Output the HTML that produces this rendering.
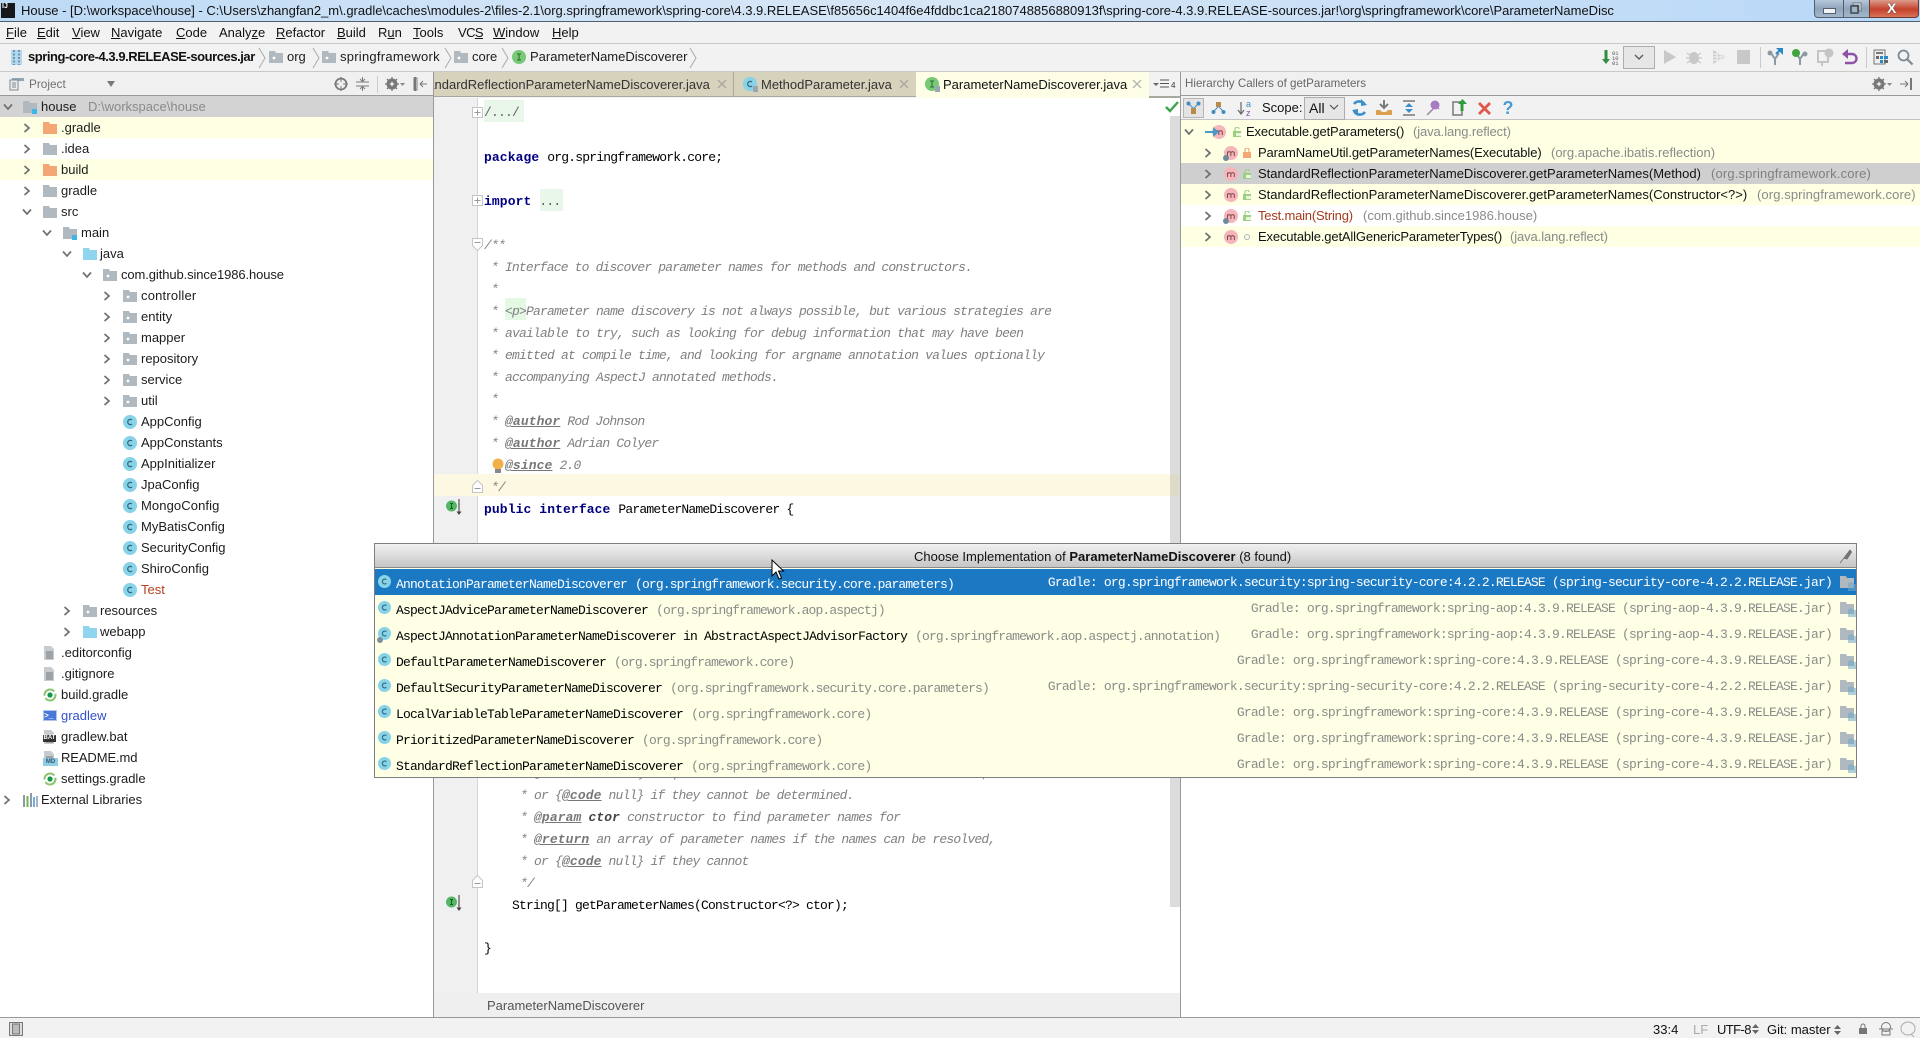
<!DOCTYPE html>
<html lang="en"><head><meta charset="utf-8"><title>House</title>
<style>
html,body{margin:0;padding:0;width:1920px;height:1038px;overflow:hidden;background:#fff}
body{position:relative;font:13px/20px "Liberation Sans",sans-serif;color:#1c1c1c}
.a{position:absolute}
.t{position:absolute;white-space:pre;height:20px;line-height:20px}
.i{position:absolute;overflow:visible}
.m{position:absolute;white-space:pre;height:20px;line-height:20px;margin-top:1px;font:13px/20px "Liberation Mono",monospace;letter-spacing:-.8px;color:#000}
.k{font-weight:bold;color:#000080;letter-spacing:.1px}
.c{color:#808080;font-style:italic}
.g{font-weight:bold;text-decoration:underline;color:#777;letter-spacing:.1px}
.p{color:#8b8b8b}
span.p,span.q{letter-spacing:-.87px;margin-left:1px}
.gy{color:#8a8a8a}
.r{right:88px}
u{text-decoration:underline}
</style></head><body>
<svg width="0" height="0" style="position:absolute"><defs>
<symbol id="fg" viewBox="0 0 14 14"><path d="M0 1h6l1 2h7v10H0z" fill="#b0b9bf"/></symbol>
<symbol id="fo" viewBox="0 0 14 14"><path d="M0 1h6l1 2h7v10H0z" fill="#f4a674"/></symbol>
<symbol id="fb" viewBox="0 0 14 14"><path d="M0 1h6l1 2h7v10H0z" fill="#8fd5ef"/></symbol>
<symbol id="pk" viewBox="0 0 14 14"><path d="M0 1h6l1 2h7v10H0z" fill="#b0b9bf"/><circle cx="5" cy="8" r="1.400" fill="#fff"/></symbol>
<symbol id="md" viewBox="0 0 14 14"><path d="M0 1h6l1 2h7v10H0z" fill="#b0b9bf"/><rect x="9" y="9" width="5" height="5" fill="#3fb4e6"/></symbol>
<symbol id="cl" viewBox="0 0 14 14"><circle cx="7" cy="7" r="7" fill="#87d3e8"/><path d="M9 5a2.600 2.600 0 1 0 0 4" fill="none" stroke="#36697f" stroke-width="1.300"/></symbol>
<symbol id="ch" viewBox="0 0 10 10"><path d="M2.500 1l4.500 4-4.500 4" fill="none" stroke="#6f6f6f" stroke-width="1.700"/></symbol>
<symbol id="cd" viewBox="0 0 10 10"><path d="M1 2.500l4 4.500 4-4.500" fill="none" stroke="#6f6f6f" stroke-width="1.700"/></symbol>
<symbol id="mt" viewBox="0 0 14 14"><circle cx="7" cy="7" r="7" fill="#f5b5ba"/><path d="M3.500 10V5.500M3.500 6.500q1.700-1.600 3.400 0V10M6.900 6.500q1.700-1.600 3.400 0V10" fill="none" stroke="#7d4a4a" stroke-width="1"/></symbol>
<symbol id="lk" viewBox="0 0 10 10"><rect x="1" y="4" width="8" height="6" fill="#9ad07f"/><path d="M3 4V2a2 2 0 0 1 4 0" fill="none" stroke="#9ad07f" stroke-width="1.200"/><rect x="4" y="6" width="5" height="3" fill="#e7f5dd"/></symbol>
<symbol id="lr" viewBox="0 0 10 10"><rect x="1" y="4" width="8" height="6" fill="#f4a674"/><path d="M3 4V2a2 2 0 0 1 4 0V4" fill="none" stroke="#f4a674" stroke-width="1.200"/></symbol>
<symbol id="lib" viewBox="0 0 16 16"><path d="M0 1h6l1 2h7v10H0z" fill="#b0b9bf"/><path d="M9 8v8M11 7v9M13 8v8M15 9v7" stroke="#6fa7c9" stroke-width="1.100"/></symbol>
<symbol id="gr" viewBox="0 0 14 14"><circle cx="7" cy="7" r="5.500" fill="none" stroke="#8cc46c" stroke-width="2" stroke-dasharray="14 2.500"/><circle cx="7" cy="7" r="2.600" fill="#14964f"/></symbol>
<symbol id="tx" viewBox="0 0 14 14"><path d="M1 0h7l3 3v11H1z" fill="#c7ccd0"/><path d="M3 6h7M3 8h7M3 10h7M3 12h7" stroke="#70777c"/></symbol>
<symbol id="ii" viewBox="0 0 14 14"><circle cx="7" cy="7" r="7" fill="#78c878"/><path d="M5 4h4M7 4v6M5 10h4" stroke="#2d6d2d" fill="none"/></symbol>
<symbol id="gi" viewBox="0 0 18 18"><circle cx="5.500" cy="7" r="5.500" fill="#55b765"/><path d="M4 4.500h3M5.500 4.500v5M4 9.500h3" stroke="#1a5c25" fill="none"/><path d="M13 0v13" stroke="#333"/><path d="M10.500 12.500h5L13 16z" fill="#444"/></symbol>
</defs></svg>

<!-- title bar -->
<div class="a" style="left:0;top:0;width:1920px;height:21px;background:linear-gradient(90deg,#bcd9f5 0,#cfe3f7 25%,#d6e6f6 50%,#c4ddf6 80%,#b7d8f8 100%)"></div>
<div class="a" style="left:0;top:21px;width:1920px;height:1px;background:#4f5f70"></div>
<div class="a" style="left:1px;top:3px;width:13px;height:15px;background:#16181c;color:#fff;font:bold 7px/8px 'Liberation Sans',sans-serif;padding-left:1px">IJ</div>
<div class="t" style="left:21px;top:1px;color:#111;font-size:13px;letter-spacing:-.01px">House - [D:\workspace\house] - C:\Users\zhangfan2_m\.gradle\caches\modules-2\files-2.1\org.springframework\spring-core\4.3.9.RELEASE\f85656c1404f6e4fddbc1ca2180748856880913f\spring-core-4.3.9.RELEASE-sources.jar!\org\springframework\core\ParameterNameDisc</div>
<div class="a" style="left:1814px;top:0;width:28px;height:17px;background:linear-gradient(#b5c7da,#8fa5bb 50%,#a3b7ca);border:1px solid #51606f;border-top:0;border-radius:0 0 0 4px"></div>
<div class="a" style="left:1823px;top:8px;width:11px;height:4px;background:#eef3f8;border:1px solid #55606b"></div>
<div class="a" style="left:1843px;top:0;width:26px;height:17px;background:linear-gradient(#b5c7da,#8fa5bb 50%,#a3b7ca);border:1px solid #51606f;border-top:0"></div>
<svg class="i" style="left:1849px;top:2px" width="14" height="13"><path d="M4 1h8v8h-2V3H4z" fill="#e8eef4" stroke="#55606b" stroke-width=".8"/><rect x="2" y="4" width="7" height="7" fill="#a0b4c8" stroke="#3c4650" stroke-width="1.500"/></svg>
<div class="a" style="left:1869px;top:0;width:48px;height:17px;background:linear-gradient(#dd9d8c,#c4422b 55%,#d9745a);border:1px solid #6b3a35;border-top:0;border-radius:0 0 4px 0"></div>
<div class="a" style="left:1887px;top:0;width:16px;height:16px;color:#fff;font:bold 14px/16px 'Liberation Sans',sans-serif;text-shadow:0 0 1px #444,0 0 1px #444">X</div>

<!-- menu -->
<div class="a" style="left:0;top:22px;width:1920px;height:21px;background:#f2f2f2"></div>
<div class="a" style="left:0;top:43px;width:1920px;height:1px;background:#c9c9c9"></div>
<div style="color:#111">
<div class="t" style="left:6px;top:23px"><u>F</u>ile</div>
<div class="t" style="left:37px;top:23px"><u>E</u>dit</div>
<div class="t" style="left:72px;top:23px"><u>V</u>iew</div>
<div class="t" style="left:111px;top:23px"><u>N</u>avigate</div>
<div class="t" style="left:176px;top:23px"><u>C</u>ode</div>
<div class="t" style="left:219px;top:23px">Analy<u>z</u>e</div>
<div class="t" style="left:276px;top:23px"><u>R</u>efactor</div>
<div class="t" style="left:337px;top:23px"><u>B</u>uild</div>
<div class="t" style="left:378px;top:23px">R<u>u</u>n</div>
<div class="t" style="left:413px;top:23px"><u>T</u>ools</div>
<div class="t" style="left:458px;top:23px;letter-spacing:-.6px">VC<u>S</u></div>
<div class="t" style="left:493px;top:23px"><u>W</u>indow</div>
<div class="t" style="left:552px;top:23px"><u>H</u>elp</div>
</div>

<!-- nav bar -->
<div class="a" style="left:0;top:44px;width:1920px;height:27px;background:#f2f2f2"></div>
<div class="a" style="left:0;top:71px;width:1920px;height:1px;background:#c9c9c9"></div>
<svg class="i" style="left:11px;top:50px" width="11" height="15"><rect width="11" height="15" fill="#b9d6e8"/><path d="M3 0v15M8 0v15" stroke="#5b9ac4" stroke-width="2" stroke-dasharray="2 1.500"/></svg>
<div class="t" style="left:28px;top:47px;font-weight:bold;letter-spacing:-.45px;color:#111">spring-core-4.3.9.RELEASE-sources.jar</div>
<svg class="i" style="left:258px;top:47px" width="8" height="22"><path d="M1 1l6 10-6 10" fill="none" stroke="#aaa"/></svg>
<svg class="i" style="left:269px;top:50px" width="14" height="14"><use href="#pk"/></svg>
<div class="t" style="left:287px;top:47px">org</div>
<svg class="i" style="left:312px;top:47px" width="8" height="22"><path d="M1 1l6 10-6 10" fill="none" stroke="#aaa"/></svg>
<svg class="i" style="left:322px;top:50px" width="14" height="14"><use href="#pk"/></svg>
<div class="t" style="left:340px;top:47px;letter-spacing:.25px">springframework</div>
<svg class="i" style="left:444px;top:47px" width="8" height="22"><path d="M1 1l6 10-6 10" fill="none" stroke="#aaa"/></svg>
<svg class="i" style="left:454px;top:50px" width="14" height="14"><use href="#pk"/></svg>
<div class="t" style="left:472px;top:47px">core</div>
<svg class="i" style="left:501px;top:47px" width="8" height="22"><path d="M1 1l6 10-6 10" fill="none" stroke="#aaa"/></svg>
<svg class="i" style="left:512px;top:50px" width="14" height="14"><use href="#ii"/></svg>
<div class="t" style="left:530px;top:47px">ParameterNameDiscoverer</div>
<svg class="i" style="left:689px;top:47px" width="8" height="22"><path d="M1 1l6 10-6 10" fill="none" stroke="#aaa"/></svg>

<!-- nav toolbar icons -->
<svg class="i" style="left:1602px;top:49px" width="20" height="16"><path d="M4 1v10" stroke="#2f8f3f" stroke-width="3"/><path d="M0 10h8l-4 5z" fill="#2f8f3f"/><text x="10" y="6" font-size="5.500" fill="#555" font-family="Liberation Mono">01</text><text x="10" y="11" font-size="5.500" fill="#555" font-family="Liberation Mono">10</text><text x="10" y="16" font-size="5.500" fill="#555" font-family="Liberation Mono">01</text></svg>
<div class="a" style="left:1623px;top:46px;width:30px;height:21px;background:#e6e6e6;border:1px solid #adadad"></div>
<svg class="i" style="left:1634px;top:53px" width="10" height="10"><path d="M1 2l4 4 4-4" fill="none" stroke="#555" stroke-width="1.300"/></svg>
<svg class="i" style="left:1663px;top:49px" width="14" height="16"><path d="M1 1l12 7-12 7z" fill="#c8c8c8"/></svg>
<svg class="i" style="left:1686px;top:49px" width="16" height="16"><ellipse cx="8" cy="9" rx="5" ry="6" fill="#c8c8c8"/><path d="M1 4l3 2M15 4l-3 2M0 9h3M13 9h3M1 14l3-2M15 14l-3-2" stroke="#c8c8c8" stroke-width="1.200"/></svg>
<svg class="i" style="left:1712px;top:49px" width="15" height="16"><path d="M1 1l13 7-13 7z" fill="#d0d0d0"/><path d="M1 5h12M1 8h12M1 11h12M5 1v14M9 1v14" stroke="#f2f2f2"/></svg>
<div class="a" style="left:1737px;top:50px;width:13px;height:14px;background:#c8c8c8"></div>
<div class="a" style="left:1760px;top:47px;width:1px;height:21px;background:#c9c9c9"></div>
<svg class="i" style="left:1767px;top:48px" width="17" height="18"><path d="M4 5l4 6v6M12 5l-4 6" stroke="#8b9aa3" stroke-width="2" fill="none"/><circle cx="3" cy="5" r="2.500" fill="#8b9aa3"/><path d="M9 0h7v7z" fill="#2a88c8"/><path d="M9 6l5-5" stroke="#2a88c8" stroke-width="2"/></svg>
<svg class="i" style="left:1792px;top:48px" width="17" height="18"><path d="M4 5l4 6v6M12 5l-4 6" stroke="#8b9aa3" stroke-width="2" fill="none"/><circle cx="4" cy="5" r="4" fill="#3fa33f"/><circle cx="13" cy="6" r="2.500" fill="#8b9aa3"/></svg>
<svg class="i" style="left:1817px;top:48px" width="17" height="18"><rect x="1" y="3" width="10" height="11" fill="none" stroke="#c5c5c5" stroke-width="2"/><circle cx="12" cy="5" r="4.500" fill="#c5c5c5"/><path d="M5 14v4" stroke="#c5c5c5" stroke-width="2"/></svg>
<svg class="i" style="left:1842px;top:49px" width="16" height="16"><path d="M2 5h8a4.500 4.500 0 0 1 0 9H3" fill="none" stroke="#8d53a8" stroke-width="2.400"/><path d="M6 0v10L0 5z" fill="#8d53a8"/></svg>
<div class="a" style="left:1866px;top:47px;width:1px;height:21px;background:#c9c9c9"></div>
<svg class="i" style="left:1873px;top:49px" width="16" height="16"><rect x="1" y="1" width="11" height="14" fill="#eee" stroke="#777"/><path d="M3 4h7" stroke="#777" stroke-width="2"/><rect x="3" y="7" width="3" height="3" fill="#666"/><rect x="7" y="7" width="3" height="3" fill="#2a88c8"/><rect x="11" y="7" width="4" height="3" fill="#2a88c8"/><rect x="7" y="11" width="3" height="3" fill="#2a88c8"/><rect x="11" y="11" width="4" height="3" fill="#666"/></svg>
<svg class="i" style="left:1897px;top:49px" width="16" height="16"><circle cx="6.500" cy="6.500" r="5" fill="none" stroke="#7c8a92" stroke-width="1.800"/><path d="M10.500 10.500l5 5" stroke="#7c8a92" stroke-width="2.200"/></svg>

<!-- left panel header -->
<div class="a" style="left:0;top:72px;width:433px;height:23px;background:#f0f0f0"></div>
<div class="a" style="left:0;top:95px;width:433px;height:1px;background:#999"></div>
<svg class="i" style="left:9px;top:77px" width="15" height="14"><rect x="3" y="1" width="12" height="3" fill="#8fa6b5"/><rect x="1" y="3" width="8" height="10" fill="#eee" stroke="#7b8a94"/><path d="M3 6h4M3 8h4M3 10h4" stroke="#7b8a94"/></svg>
<div class="t" style="left:29px;top:74px;color:#6f6f6f;font-size:11.800px">Project</div>
<svg class="i" style="left:107px;top:81px" width="8" height="6"><path d="M0 0h8L4 6z" fill="#777"/></svg>
<svg class="i" style="left:334px;top:77px" width="14" height="14"><circle cx="7" cy="7" r="5.500" fill="none" stroke="#7a7a7a" stroke-width="1.800"/><path d="M7 0v5M7 9v5M0 7h5M9 7h5" stroke="#7a7a7a"/></svg>
<svg class="i" style="left:356px;top:77px" width="13" height="14"><path d="M0 5h13M0 9h13M6.500 0v3.500M6.500 10.500V14M4 2l2.500 2.500L9 2M4 12l2.500-2.500L9 12" fill="none" stroke="#7a7a7a"/></svg>
<div class="a" style="left:377px;top:76px;width:1px;height:17px;background:#ccc"></div>
<svg class="i" style="left:385px;top:77px" width="20" height="14"><circle cx="7" cy="7" r="4" fill="none" stroke="#777" stroke-width="3"/><path d="M7 0v14M0 7h14M2 2l10 10M12 2L2 12" stroke="#777" stroke-width="1.300"/><circle cx="7" cy="7" r="1.600" fill="#f0f0f0"/><path d="M15 6h5l-2.500 3z" fill="#888"/></svg>
<svg class="i" style="left:414px;top:77px" width="13" height="14"><path d="M1 0v14" stroke="#777" stroke-width="2"/><rect x="0" y="1" width="3" height="12" fill="none" stroke="#777"/><path d="M6 7h7M6 7l3-3M6 7l3 3" fill="none" stroke="#777"/></svg>

<!-- project tree -->
<div class="a" style="left:0;top:96px;width:433px;height:21px;background:#d3d3d3"></div>
<div class="a" style="left:0;top:117px;width:433px;height:21px;background:#ffffe4"></div>
<div class="a" style="left:0;top:159px;width:433px;height:21px;background:#ffffe4"></div>
<svg class="i" style="left:3px;top:102px" width="10" height="10"><use href="#cd"/></svg><svg class="i" style="left:23px;top:100px" width="14" height="14"><use href="#md"/></svg><div class="t" style="left:41px;top:97px">house</div><div class="t gy" style="left:88px;top:97px">D:\workspace\house</div>
<svg class="i" style="left:22px;top:123px" width="10" height="10"><use href="#ch"/></svg><svg class="i" style="left:43px;top:121px" width="14" height="14"><use href="#fo"/></svg><div class="t" style="left:61px;top:118px">.gradle</div>
<svg class="i" style="left:22px;top:144px" width="10" height="10"><use href="#ch"/></svg><svg class="i" style="left:43px;top:142px" width="14" height="14"><use href="#fg"/></svg><div class="t" style="left:61px;top:139px">.idea</div>
<svg class="i" style="left:22px;top:165px" width="10" height="10"><use href="#ch"/></svg><svg class="i" style="left:43px;top:163px" width="14" height="14"><use href="#fo"/></svg><div class="t" style="left:61px;top:160px">build</div>
<svg class="i" style="left:22px;top:186px" width="10" height="10"><use href="#ch"/></svg><svg class="i" style="left:43px;top:184px" width="14" height="14"><use href="#fg"/></svg><div class="t" style="left:61px;top:181px">gradle</div>
<svg class="i" style="left:22px;top:207px" width="10" height="10"><use href="#cd"/></svg><svg class="i" style="left:43px;top:205px" width="14" height="14"><use href="#fg"/></svg><div class="t" style="left:61px;top:202px">src</div>
<svg class="i" style="left:42px;top:228px" width="10" height="10"><use href="#cd"/></svg><svg class="i" style="left:63px;top:226px" width="14" height="14"><use href="#md"/></svg><div class="t" style="left:81px;top:223px">main</div>
<svg class="i" style="left:62px;top:249px" width="10" height="10"><use href="#cd"/></svg><svg class="i" style="left:83px;top:247px" width="14" height="14"><use href="#fb"/></svg><div class="t" style="left:100px;top:244px">java</div>
<svg class="i" style="left:82px;top:270px" width="10" height="10"><use href="#cd"/></svg><svg class="i" style="left:103px;top:268px" width="14" height="14"><use href="#pk"/></svg><div class="t" style="left:121px;top:265px;letter-spacing:-.1px">com.github.since1986.house</div>
<svg class="i" style="left:102px;top:291px" width="10" height="10"><use href="#ch"/></svg><svg class="i" style="left:123px;top:289px" width="14" height="14"><use href="#pk"/></svg><div class="t" style="left:141px;top:286px;letter-spacing:.2px">controller</div>
<svg class="i" style="left:102px;top:312px" width="10" height="10"><use href="#ch"/></svg><svg class="i" style="left:123px;top:310px" width="14" height="14"><use href="#pk"/></svg><div class="t" style="left:141px;top:307px">entity</div>
<svg class="i" style="left:102px;top:333px" width="10" height="10"><use href="#ch"/></svg><svg class="i" style="left:123px;top:331px" width="14" height="14"><use href="#pk"/></svg><div class="t" style="left:141px;top:328px">mapper</div>
<svg class="i" style="left:102px;top:354px" width="10" height="10"><use href="#ch"/></svg><svg class="i" style="left:123px;top:352px" width="14" height="14"><use href="#pk"/></svg><div class="t" style="left:141px;top:349px">repository</div>
<svg class="i" style="left:102px;top:375px" width="10" height="10"><use href="#ch"/></svg><svg class="i" style="left:123px;top:373px" width="14" height="14"><use href="#pk"/></svg><div class="t" style="left:141px;top:370px">service</div>
<svg class="i" style="left:102px;top:396px" width="10" height="10"><use href="#ch"/></svg><svg class="i" style="left:123px;top:394px" width="14" height="14"><use href="#pk"/></svg><div class="t" style="left:141px;top:391px">util</div>
<svg class="i" style="left:123px;top:415px" width="14" height="14"><use href="#cl"/></svg><div class="t" style="left:141px;top:412px">AppConfig</div>
<svg class="i" style="left:123px;top:436px" width="14" height="14"><use href="#cl"/></svg><div class="t" style="left:141px;top:433px">AppConstants</div>
<svg class="i" style="left:123px;top:457px" width="14" height="14"><use href="#cl"/></svg><div class="t" style="left:141px;top:454px">AppInitializer</div>
<svg class="i" style="left:123px;top:478px" width="14" height="14"><use href="#cl"/></svg><div class="t" style="left:141px;top:475px">JpaConfig</div>
<svg class="i" style="left:123px;top:499px" width="14" height="14"><use href="#cl"/></svg><div class="t" style="left:141px;top:496px;letter-spacing:.1px">MongoConfig</div>
<svg class="i" style="left:123px;top:520px" width="14" height="14"><use href="#cl"/></svg><div class="t" style="left:141px;top:517px">MyBatisConfig</div>
<svg class="i" style="left:123px;top:541px" width="14" height="14"><use href="#cl"/></svg><div class="t" style="left:141px;top:538px">SecurityConfig</div>
<svg class="i" style="left:123px;top:562px" width="14" height="14"><use href="#cl"/></svg><div class="t" style="left:141px;top:559px">ShiroConfig</div>
<svg class="i" style="left:123px;top:583px" width="14" height="14"><use href="#cl"/></svg><div class="t" style="left:141px;top:580px;color:#b5401f">Test</div>
<svg class="i" style="left:62px;top:606px" width="10" height="10"><use href="#ch"/></svg><svg class="i" style="left:83px;top:604px" width="14" height="14"><use href="#pk"/></svg><div class="t" style="left:100px;top:601px">resources</div>
<svg class="i" style="left:62px;top:627px" width="10" height="10"><use href="#ch"/></svg><svg class="i" style="left:83px;top:625px" width="14" height="14"><use href="#fb"/></svg><div class="t" style="left:100px;top:622px">webapp</div>
<svg class="i" style="left:43px;top:646px" width="14" height="14"><use href="#tx"/></svg><div class="t" style="left:61px;top:643px">.editorconfig</div>
<svg class="i" style="left:43px;top:667px" width="14" height="14"><use href="#tx"/></svg><div class="t" style="left:61px;top:664px">.gitignore</div>
<svg class="i" style="left:43px;top:688px" width="14" height="14"><use href="#gr"/></svg><div class="t" style="left:61px;top:685px">build.gradle</div>
<div class="a" style="left:43px;top:710px;width:14px;height:11px;background:#4a78d6;color:#fff;font:bold 8px/11px 'Liberation Mono',monospace;border:1px solid #b0c4ec;box-sizing:border-box">&gt;_</div><div class="t" style="left:61px;top:706px;color:#3152c8">gradlew</div>
<svg class="i" style="left:43px;top:730px" width="14" height="14"><use href="#tx"/></svg><div class="a" style="left:43px;top:735px;width:13px;height:7px;background:#333;color:#fff;font:bold 6px/7px 'Liberation Sans',sans-serif;text-align:center">BAT</div><div class="t" style="left:61px;top:727px">gradlew.bat</div>
<svg class="i" style="left:43px;top:751px" width="14" height="14"><use href="#tx"/></svg><div class="a" style="left:43px;top:758px;width:15px;height:8px;background:#8fcfe6;color:#39566b;font:bold 6px/8px 'Liberation Sans',sans-serif;text-align:center">MD</div><div class="t" style="left:61px;top:748px;letter-spacing:-.1px">README.md</div>
<svg class="i" style="left:43px;top:772px" width="14" height="14"><use href="#gr"/></svg><div class="t" style="left:61px;top:769px">settings.gradle</div>
<svg class="i" style="left:2px;top:795px" width="10" height="10"><use href="#ch"/></svg><svg class="i" style="left:23px;top:793px" width="14" height="14"><path d="M1 2v12" stroke="#8b9aa3" stroke-width="2"/><path d="M4.500 3v11" stroke="#74b354" stroke-width="2"/><path d="M8 0v14" stroke="#8b9aa3" stroke-width="2"/><path d="M11 4v10" stroke="#74aee0" stroke-width="2"/><path d="M14 3v11" stroke="#8b9aa3" stroke-width="1.500"/></svg><div class="t" style="left:41px;top:790px">External Libraries</div>

<!-- vertical dividers -->
<div class="a" style="left:433px;top:72px;width:1px;height:945px;background:#999"></div>
<div class="a" style="left:1180px;top:72px;width:1px;height:945px;background:#999"></div>

<!-- tabs -->
<div class="a" style="left:434px;top:72px;width:299px;height:24px;background:#d6d2bc"></div>
<div class="a" style="left:733px;top:72px;width:1px;height:24px;background:#a8a8a0"></div>
<div class="a" style="left:734px;top:72px;width:182px;height:24px;background:#d6d2bc"></div>
<div class="a" style="left:916px;top:72px;width:233px;height:26px;background:#fefee6"></div>
<div class="a" style="left:1149px;top:72px;width:31px;height:24px;background:#f2f2f2"></div>
<div class="a" style="left:434px;top:96px;width:482px;height:2px;background:#f2f2f2;border-top:1px solid #a8a8a0;box-sizing:border-box"></div>
<div class="a" style="left:1149px;top:96px;width:31px;height:2px;background:#a8a8a0"></div>
<div class="a" style="left:434px;top:72px;width:299px;height:24px;overflow:hidden"><div class="t" style="left:-19px;top:3px;color:#333">StandardReflectionParameterNameDiscoverer.java</div></div>
<svg class="i" style="left:717px;top:79px" width="10" height="10"><path d="M1 1l8 8M9 1l-8 8" stroke="#a8a8a0" stroke-width="1.300"/></svg>
<svg class="i" style="left:743px;top:77px" width="16" height="16"><use href="#cl" width="14" height="14"/><rect x="10" y="9" width="5" height="6" fill="#9aa7b0"/></svg>
<div class="t" style="left:761px;top:75px;color:#333">MethodParameter.java</div>
<svg class="i" style="left:899px;top:79px" width="10" height="10"><path d="M1 1l8 8M9 1l-8 8" stroke="#a8a8a0" stroke-width="1.300"/></svg>
<svg class="i" style="left:925px;top:77px" width="16" height="16"><use href="#ii" width="14" height="14"/><rect x="10" y="9" width="5" height="6" fill="#9aa7b0"/></svg>
<div class="t" style="left:943px;top:75px;color:#111">ParameterNameDiscoverer.java</div>
<svg class="i" style="left:1132px;top:79px" width="10" height="10"><path d="M1 1l8 8M9 1l-8 8" stroke="#b5b5ad" stroke-width="1.300"/></svg>
<svg class="i" style="left:1153px;top:79px" width="24" height="10"><path d="M0 4h6L3 7z" fill="#666"/><path d="M7 1h9M7 4.500h9M7 8h9" stroke="#555"/><text x="18" y="9" font-size="8" fill="#333" font-family="Liberation Sans">4</text></svg>

<!-- editor -->
<div class="a" style="left:434px;top:98px;width:43px;height:895px;background:#f0f0f0"></div>
<div class="a" style="left:477px;top:98px;width:1px;height:895px;background:#d6d6d6"></div>
<div class="a" style="left:1170px;top:116px;width:10px;height:791px;background:#dcdcdc"></div>
<div class="a" style="left:434px;top:474px;width:736px;height:22px;background:#fdf8e2"></div>
<div class="a" style="left:1170px;top:474px;width:10px;height:22px;background:#dedac9"></div>
<svg class="i" style="left:1165px;top:101px" width="14" height="12"><path d="M1 6l4 4 8-9" fill="none" stroke="#3ea34a" stroke-width="2.400"/></svg>
<div class="a" style="left:484px;top:100px;width:40px;height:22px;background:#e9f6ea"></div>
<div class="a" style="left:540px;top:189px;width:23px;height:22px;background:#e9f6ea"></div>
<div class="a" style="left:505px;top:298px;width:21px;height:22px;background:#e3f9e3"></div>
<svg class="i" style="left:472px;top:107px" width="11" height="11"><rect x=".5" y=".5" width="10" height="10" fill="#fff" stroke="#c4c4c4"/><path d="M2.500 5.500h6M5.500 2.500v6" stroke="#999"/></svg>
<svg class="i" style="left:472px;top:195px" width="11" height="11"><rect x=".5" y=".5" width="10" height="10" fill="#fff" stroke="#c4c4c4"/><path d="M2.500 5.500h6M5.500 2.500v6" stroke="#999"/></svg>
<svg class="i" style="left:472px;top:238px" width="11" height="13"><path d="M.5.500h10v7l-5 5-5-5z" fill="#fff" stroke="#c4c4c4"/><path d="M2.500 4.500h6" stroke="#999"/></svg>
<svg class="i" style="left:472px;top:480px" width="11" height="13"><path d="M.5 12.500h10v-7l-5-5-5 5z" fill="#fff" stroke="#c4c4c4"/><path d="M2.500 8.500h6" stroke="#999"/></svg>
<svg class="i" style="left:472px;top:875px" width="11" height="13"><path d="M.5 12.500h10v-7l-5-5-5 5z" fill="#fff" stroke="#c4c4c4"/><path d="M2.500 8.500h6" stroke="#999"/></svg>
<svg class="i" style="left:446px;top:499px" width="18" height="18"><use href="#gi"/></svg>
<svg class="i" style="left:446px;top:895px" width="18" height="18"><use href="#gi"/></svg>
<div class="m" style="left:484px;top:102px;color:#666">/.../</div>
<div class="m" style="left:484px;top:147px"><span class="k">package </span>org.springframework.core;</div>
<div class="m" style="left:484px;top:191px"><span class="k">import </span><span style="color:#555">...</span></div>
<div class="m c" style="left:484px;top:235px">/**</div>
<div class="m c" style="left:491px;top:257px;letter-spacing:-.83px">* Interface to discover parameter names for methods and constructors.</div>
<div class="m c" style="left:491px;top:279px">*</div>
<div class="m c" style="left:491px;top:301px">* &lt;p&gt;Parameter name discovery is not always possible, but various strategies are</div>
<div class="m c" style="left:491px;top:323px">* available to try, such as looking for debug information that may have been</div>
<div class="m c" style="left:491px;top:345px">* emitted at compile time, and looking for argname annotation values optionally</div>
<div class="m c" style="left:491px;top:367px">* accompanying AspectJ annotated methods.</div>
<div class="m c" style="left:491px;top:389px">*</div>
<div class="m c" style="left:491px;top:411px">* <span class="g">@author</span> Rod Johnson</div>
<div class="m c" style="left:491px;top:433px">* <span class="g">@author</span> Adrian Colyer</div>
<div class="m c" style="left:491px;top:455px">* <span class="g">@since</span> 2.0</div>
<svg class="i" style="left:492px;top:458px" width="12" height="16"><circle cx="6" cy="6" r="5.500" fill="#f2b04a"/><rect x="3" y="11" width="6" height="4" fill="#888"/></svg>
<div class="m c" style="left:491px;top:477px">*/</div>
<div class="m" style="left:484px;top:499px"><span class="k">public interface </span>ParameterNameDiscoverer {</div>
<div class="m c" style="left:520px;top:763px">* @return an array of parameter names if the names can be resolved,</div>
<div class="m c" style="left:520px;top:785px">* or {<span class="g">@code</span> null} if they cannot be determined.</div>
<div class="m c" style="left:520px;top:807px">* <span class="g">@param</span> <b style="color:#444;font-style:italic;letter-spacing:.1px">ctor</b> constructor to find parameter names for</div>
<div class="m c" style="left:520px;top:829px">* <span class="g">@return</span> an array of parameter names if the names can be resolved,</div>
<div class="m c" style="left:520px;top:851px">* or {<span class="g">@code</span> null} if they cannot</div>
<div class="m c" style="left:520px;top:873px">*/</div>
<div class="m" style="left:512px;top:895px">String[] getParameterNames(Constructor&lt;?&gt; ctor);</div>
<div class="m" style="left:484px;top:938px">}</div>
<div class="a" style="left:434px;top:993px;width:746px;height:24px;background:#efefef"></div>
<div class="t" style="left:487px;top:996px;color:#555">ParameterNameDiscoverer</div>

<!-- right panel -->
<div class="a" style="left:1181px;top:72px;width:739px;height:23px;background:#f0f0f0"></div>
<div class="a" style="left:1181px;top:95px;width:739px;height:1px;background:#999"></div>
<div class="t" style="left:1185px;top:74px;color:#666;font-size:11.600px">Hierarchy Callers of getParameters</div>
<svg class="i" style="left:1872px;top:77px" width="20" height="14"><circle cx="7" cy="7" r="4" fill="none" stroke="#777" stroke-width="3"/><path d="M7 0v14M0 7h14M2 2l10 10M12 2L2 12" stroke="#777" stroke-width="1.300"/><circle cx="7" cy="7" r="1.600" fill="#f0f0f0"/><path d="M15 6h5l-2.500 3z" fill="#888"/></svg>
<svg class="i" style="left:1900px;top:77px" width="13" height="14"><path d="M0 7h8M8 7l-3-3M8 7l-3 3" fill="none" stroke="#777"/><rect x="10" y="1" width="2" height="12" fill="#777"/></svg>
<div class="a" style="left:1181px;top:96px;width:739px;height:24px;background:#f2f2f2"></div>
<div class="a" style="left:1181px;top:119px;width:739px;height:1px;background:#c4c4c4"></div>
<div class="a" style="left:1183px;top:98px;width:21px;height:20px;background:#e4e4e4;border:1px solid #b5b5b5;box-sizing:border-box"></div>
<svg class="i" style="left:1186px;top:101px" width="15" height="14"><circle cx="2.500" cy="2.500" r="2" fill="#3e8fc0"/><circle cx="12.500" cy="2.500" r="2" fill="#3e8fc0"/><path d="M3 3l4 4M12 3L8 7" stroke="#3e8fc0"/><rect x="5" y="7" width="5" height="6" fill="#b98a4a"/></svg>
<svg class="i" style="left:1211px;top:101px" width="15" height="14"><rect x="5" y="1" width="5" height="5" fill="#b98a4a"/><path d="M7 6L3 10M8 6l4 4" stroke="#3e8fc0"/><circle cx="2.500" cy="11" r="2" fill="#3e8fc0"/><circle cx="12.500" cy="11" r="2" fill="#3e8fc0"/></svg>
<svg class="i" style="left:1237px;top:99px" width="17" height="18"><path d="M4 3v12M1 11l3 4 3-4" fill="none" stroke="#666" stroke-width="1.200"/><text x="9" y="8" font-size="9" fill="#3e8fc0" font-family="Liberation Sans">a</text><text x="9" y="17" font-size="9" fill="#8d53a8" font-family="Liberation Sans">z</text></svg>
<div class="t" style="left:1262px;top:98px;color:#111">Scope:</div>
<div class="a" style="left:1304px;top:97px;width:39px;height:21px;background:#e6e6e6;border:1px solid #adadad"></div>
<div class="t" style="left:1309px;top:98px;color:#111;font-size:14px">All</div>
<svg class="i" style="left:1329px;top:103px" width="10" height="10"><path d="M1 2l4 4 4-4" fill="none" stroke="#555" stroke-width="1.200"/></svg>
<svg class="i" style="left:1351px;top:99px" width="17" height="18"><path d="M14 6A6.500 6.500 0 0 0 3 5M3 12a6.500 6.500 0 0 0 11 1" fill="none" stroke="#3a8fcc" stroke-width="2.600"/><path d="M10 0v7l6-1zM7 17v-7l-6 1z" fill="#3a8fcc"/></svg>
<svg class="i" style="left:1376px;top:100px" width="16" height="16"><path d="M8 0v7M4 4l4 4 4-4" fill="none" stroke="#7a7a7a" stroke-width="2"/><path d="M0 10h4l2 2h4l2-2h4v5H0z" fill="#d9a04f"/></svg>
<svg class="i" style="left:1402px;top:100px" width="14" height="16"><path d="M1 1h12M1 15h12" stroke="#777" stroke-width="1.500"/><path d="M7 3l4 4H3zM7 13l4-4H3z" fill="#3a8fcc"/></svg>
<svg class="i" style="left:1426px;top:100px" width="15" height="16"><circle cx="9" cy="5" r="4.500" fill="#a77bc0"/><path d="M2 14l5-5M6 2l7 7" stroke="#a77bc0" stroke-width="1.500"/><path d="M1 15l4-4" stroke="#999" stroke-width="1.500"/></svg>
<svg class="i" style="left:1452px;top:99px" width="15" height="17"><path d="M1 3h9v13H1z" fill="#f2f2f2" stroke="#777" stroke-width="1.500"/><path d="M10 12V4" stroke="#2d9c3c" stroke-width="3"/><path d="M6 5l4.500-5L15 5z" fill="#2d9c3c"/></svg>
<svg class="i" style="left:1478px;top:102px" width="13" height="13"><path d="M1 1l11 11M12 1L1 12" stroke="#e0584c" stroke-width="2.800"/></svg>
<div class="a" style="left:1501px;top:97px;width:14px;height:22px;color:#4a9bd4;font:bold 18px/22px 'Liberation Sans',sans-serif;text-align:center">?</div>

<div class="a" style="left:1181px;top:120px;width:739px;height:127px;background:#ffffe4"></div>
<div class="a" style="left:1181px;top:163px;width:739px;height:21px;background:#cfcfcf"></div>
<div class="a" style="left:1181px;top:205px;width:739px;height:21px;background:#fff"></div>
<svg class="i" style="left:1184px;top:127px" width="10" height="10"><use href="#cd"/></svg>
<svg class="i" style="left:1212px;top:125px" width="14" height="14"><use href="#mt"/></svg>
<svg class="i" style="left:1205px;top:127px" width="15" height="10"><path d="M0 4h8V0l6 5-6 5V6H0z" fill="#4a9bc9"/></svg>
<svg class="i" style="left:1232px;top:127px" width="10" height="10"><use href="#lk"/></svg>
<div class="t" style="left:1246px;top:122px;color:#111;letter-spacing:-.14px">Executable.getParameters()</div><div class="t gy" style="left:1413px;top:122px;letter-spacing:-.1px">(java.lang.reflect)</div>
<svg class="i" style="left:1203px;top:148px" width="10" height="10"><use href="#ch"/></svg>
<svg class="i" style="left:1224px;top:146px" width="14" height="14"><use href="#mt"/></svg>
<svg class="i" style="left:1242px;top:148px" width="10" height="10"><use href="#lr"/></svg>
<div class="a" style="left:1223px;top:155px;width:6px;height:6px;background:#6f8b9c;border-radius:50%"></div>
<div class="t" style="left:1258px;top:143px;color:#111;letter-spacing:-.11px">ParamNameUtil.getParameterNames(Executable)</div><div class="t gy" style="left:1551px;top:143px">(org.apache.ibatis.reflection)</div>
<svg class="i" style="left:1203px;top:169px" width="10" height="10"><use href="#ch"/></svg>
<svg class="i" style="left:1224px;top:167px" width="14" height="14"><use href="#mt"/></svg>
<svg class="i" style="left:1242px;top:169px" width="10" height="10"><use href="#lk"/></svg>
<div class="t" style="left:1258px;top:164px;color:#111">StandardReflectionParameterNameDiscoverer.getParameterNames(Method)</div><div class="t" style="left:1711px;top:164px;color:#7f7f7f;letter-spacing:.15px">(org.springframework.core)</div>
<svg class="i" style="left:1203px;top:190px" width="10" height="10"><use href="#ch"/></svg>
<svg class="i" style="left:1224px;top:188px" width="14" height="14"><use href="#mt"/></svg>
<svg class="i" style="left:1242px;top:190px" width="10" height="10"><use href="#lk"/></svg>
<div class="t" style="left:1258px;top:185px;color:#111">StandardReflectionParameterNameDiscoverer.getParameterNames(Constructor&lt;?&gt;)</div><div class="t gy" style="left:1757px;top:185px;letter-spacing:.1px">(org.springframework.core)</div>
<svg class="i" style="left:1203px;top:211px" width="10" height="10"><use href="#ch"/></svg>
<svg class="i" style="left:1224px;top:209px" width="14" height="14"><use href="#mt"/></svg>
<svg class="i" style="left:1242px;top:211px" width="10" height="10"><use href="#lk"/></svg>
<div class="a" style="left:1223px;top:218px;width:6px;height:6px;background:#6f8b9c;border-radius:50%"></div>
<div class="t" style="left:1258px;top:206px;color:#a33a1b;letter-spacing:-.2px">Test.main(String)</div><div class="t gy" style="left:1363px;top:206px">(com.github.since1986.house)</div>
<svg class="i" style="left:1203px;top:232px" width="10" height="10"><use href="#ch"/></svg>
<svg class="i" style="left:1224px;top:230px" width="14" height="14"><use href="#mt"/></svg>
<div class="a" style="left:1244px;top:234px;width:6px;height:6px;border:1px solid #a9b4bb;border-radius:50%;box-sizing:border-box"></div>
<div class="t" style="left:1258px;top:227px;color:#111;letter-spacing:-.15px">Executable.getAllGenericParameterTypes()</div><div class="t gy" style="left:1510px;top:227px;letter-spacing:-.1px">(java.lang.reflect)</div>

<!-- popup -->
<div class="a" style="left:374px;top:543px;width:1483px;height:235px;background:#ffffe5;border:1px solid #7f7f7f;box-sizing:border-box"></div>
<div class="a" style="left:375px;top:544px;width:1481px;height:24px;background:linear-gradient(#f1f1f1,#c6c6c6);border-bottom:1px solid #8a8a8a;box-sizing:border-box"></div>
<div class="t" style="left:914px;top:547px;color:#111">Choose Implementation of <b>ParameterNameDiscoverer</b> (8 found)</div>
<svg class="i" style="left:1838px;top:549px" width="14" height="15"><path d="M2 14l4-5M6 9L12 1l1.500 2L9 10z" fill="#777" stroke="#666" stroke-width=".8"/></svg>
<div class="a" style="left:375px;top:569px;width:1481px;height:26px;background:#1b79c4"></div>
<svg class="i" style="left:378px;top:575px" width="13" height="13"><use href="#cl"/></svg>
<svg class="i" style="left:378px;top:601px" width="13" height="13"><use href="#cl"/></svg>
<svg class="i" style="left:378px;top:627px" width="13" height="13"><use href="#cl"/></svg>
<div class="a" style="left:377px;top:637px;width:6px;height:6px;background:#7d8f9b;border-radius:50%"></div>
<svg class="i" style="left:378px;top:653px" width="13" height="13"><use href="#cl"/></svg>
<svg class="i" style="left:378px;top:679px" width="13" height="13"><use href="#cl"/></svg>
<svg class="i" style="left:378px;top:705px" width="13" height="13"><use href="#cl"/></svg>
<svg class="i" style="left:378px;top:731px" width="13" height="13"><use href="#cl"/></svg>
<svg class="i" style="left:378px;top:757px" width="13" height="13"><use href="#cl"/></svg>
<div class="m" style="left:396px;top:574px;color:#fff">AnnotationParameterNameDiscoverer <span class="q">(org.springframework.security.core.parameters)</span></div>
<div class="m" style="left:396px;top:600px">AspectJAdviceParameterNameDiscoverer <span class="p">(org.springframework.aop.aspectj)</span></div>
<div class="m" style="left:396px;top:626px">AspectJAnnotationParameterNameDiscoverer in AbstractAspectJAdvisorFactory <span class="p">(org.springframework.aop.aspectj.annotation)</span></div>
<div class="m" style="left:396px;top:652px">DefaultParameterNameDiscoverer <span class="p">(org.springframework.core)</span></div>
<div class="m" style="left:396px;top:678px">DefaultSecurityParameterNameDiscoverer <span class="p">(org.springframework.security.core.parameters)</span></div>
<div class="m" style="left:396px;top:704px">LocalVariableTableParameterNameDiscoverer <span class="p">(org.springframework.core)</span></div>
<div class="m" style="left:396px;top:730px">PrioritizedParameterNameDiscoverer <span class="p">(org.springframework.core)</span></div>
<div class="m" style="left:396px;top:756px">StandardReflectionParameterNameDiscoverer <span class="p">(org.springframework.core)</span></div>
<div class="m r" style="top:572px;color:#fff">Gradle: org.springframework.security:spring-security-core:4.2.2.RELEASE (spring-security-core-4.2.2.RELEASE.jar)</div>
<div class="m r p" style="top:598px">Gradle: org.springframework:spring-aop:4.3.9.RELEASE (spring-aop-4.3.9.RELEASE.jar)</div>
<div class="m r p" style="top:624px">Gradle: org.springframework:spring-aop:4.3.9.RELEASE (spring-aop-4.3.9.RELEASE.jar)</div>
<div class="m r p" style="top:650px">Gradle: org.springframework:spring-core:4.3.9.RELEASE (spring-core-4.3.9.RELEASE.jar)</div>
<div class="m r p" style="top:676px">Gradle: org.springframework.security:spring-security-core:4.2.2.RELEASE (spring-security-core-4.2.2.RELEASE.jar)</div>
<div class="m r p" style="top:702px">Gradle: org.springframework:spring-core:4.3.9.RELEASE (spring-core-4.3.9.RELEASE.jar)</div>
<div class="m r p" style="top:728px">Gradle: org.springframework:spring-core:4.3.9.RELEASE (spring-core-4.3.9.RELEASE.jar)</div>
<div class="m r p" style="top:754px">Gradle: org.springframework:spring-core:4.3.9.RELEASE (spring-core-4.3.9.RELEASE.jar)</div>
<svg class="i" style="left:1840px;top:575px" width="16" height="16"><use href="#lib"/></svg>
<svg class="i" style="left:1840px;top:601px" width="16" height="16"><use href="#lib"/></svg>
<svg class="i" style="left:1840px;top:627px" width="16" height="16"><use href="#lib"/></svg>
<svg class="i" style="left:1840px;top:653px" width="16" height="16"><use href="#lib"/></svg>
<svg class="i" style="left:1840px;top:679px" width="16" height="16"><use href="#lib"/></svg>
<svg class="i" style="left:1840px;top:705px" width="16" height="16"><use href="#lib"/></svg>
<svg class="i" style="left:1840px;top:731px" width="16" height="16"><use href="#lib"/></svg>
<svg class="i" style="left:1840px;top:757px" width="16" height="16"><use href="#lib"/></svg>
<svg class="i" style="left:771px;top:559px" width="13" height="21"><path d="M1 1v16l4-4 3 7 2.500-1-3-7h5z" fill="#fff" stroke="#000"/></svg>

<!-- status bar -->
<div class="a" style="left:0;top:1017px;width:1920px;height:21px;background:#f2f2f2;border-top:1px solid #999;box-sizing:border-box"></div>
<svg class="i" style="left:9px;top:1022px" width="14" height="14"><rect x=".5" y=".5" width="13" height="13" fill="#ddd" stroke="#777"/><rect x="3.500" y="2" width="7" height="10" fill="#bbb" stroke="#777"/></svg>
<div class="t" style="left:1653px;top:1020px;color:#111">33:4</div>
<div class="t" style="left:1693px;top:1020px;color:#aaa">LF</div>
<div class="t" style="left:1717px;top:1020px;color:#111;letter-spacing:-.6px">UTF-8</div>
<svg class="i" style="left:1752px;top:1024px" width="7" height="10"><path d="M0 4h7L3.500 0zM0 6h7L3.500 10z" fill="#666"/></svg>
<div class="t" style="left:1767px;top:1020px;color:#111">Git: master</div>
<svg class="i" style="left:1834px;top:1025px" width="7" height="10"><path d="M0 4h7L3.500 0zM0 6h7L3.500 10z" fill="#666"/></svg>
<svg class="i" style="left:1859px;top:1024px" width="8" height="10"><rect y="4" width="8" height="6" fill="#777"/><path d="M2 4V2a2 2 0 0 1 4 0v2" fill="none" stroke="#777"/></svg>
<svg class="i" style="left:1879px;top:1022px" width="14" height="15"><circle cx="7" cy="5" r="4.500" fill="none" stroke="#777"/><path d="M0 7h14M3 9h8v4H3z" fill="none" stroke="#777"/></svg>
<svg class="i" style="left:1900px;top:1021px" width="16" height="16"><ellipse cx="8" cy="7.500" rx="7" ry="6.500" fill="none" stroke="#aaa"/><path d="M11 13l3 3" stroke="#aaa"/></svg>
</body></html>
